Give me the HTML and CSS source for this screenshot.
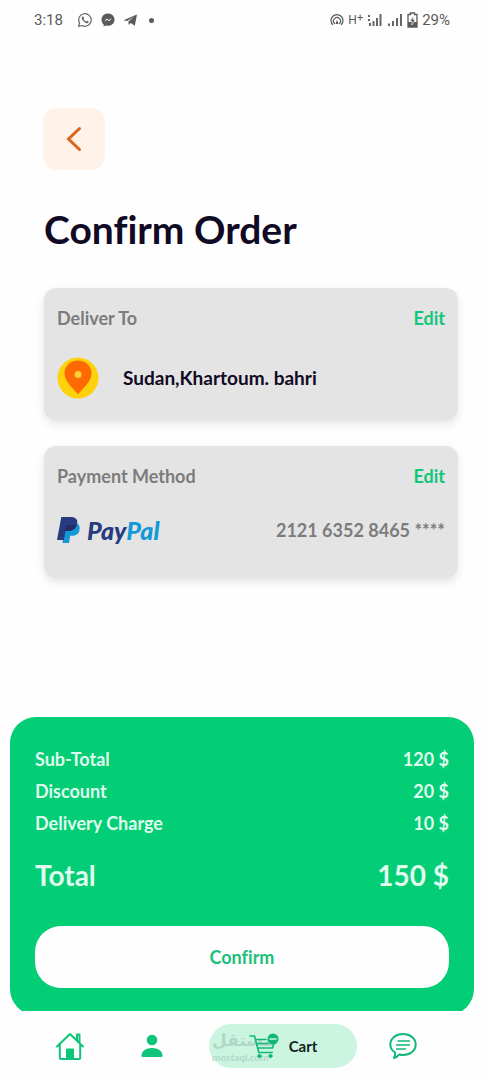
FILE: index.html
```html
<!DOCTYPE html>
<html lang="en">
<head>
<meta charset="utf-8">
<meta name="viewport" content="width=device-width, initial-scale=1">
<title>Confirm Order</title>
<link rel="stylesheet" href="styles.css">
</head>
<body>
<div class="screen">
  <header class="status">
    <div class="status-group status-left">
      <span class="clock">3:18</span>
      <svg width="16" height="16" viewBox="0 0 16 16" fill="none" stroke="#666" stroke-width="1.2" aria-hidden="true"><path d="M1.6 14.4l.9-3.3A6.3 6.3 0 1 1 5 13.500z" stroke-linejoin="round"/><path d="M5.200 4.500c-1 1.200-.3 3 1.400 4.800s3.700 2.600 4.900 1.500l.2-1.100-1.800-.9-.9.8c-1.200-.5-2-1.300-2.400-2.300l.7-.8-.8-1.800z" fill="#666" stroke="none"/></svg>
      <svg width="14" height="16" viewBox="0 0 14 16" aria-hidden="true"><path d="M7 1.500C3.200 1.500.5 4.200.5 7.700c0 1.900.8 3.500 2.100 4.600v2.200l2-1.100c.8.2 1.500.3 2.400.3 3.800 0 6.500-2.600 6.500-6S10.800 1.500 7 1.500z" fill="#5a5a5a"/><path d="M3 9.600l2.900-3.100 1.700 1.400L11 6 8.100 9.200 6.400 7.800z" fill="#fff"/></svg>
      <svg width="15" height="16" viewBox="0 0 15 16" aria-hidden="true"><path d="M.5 8.300L14 2.500l-2.200 11.300-4-2.800-1.900 2-.6-3.600 5.500-4.700-6.700 4.200z" fill="#5a5a5a"/></svg>
      <span class="dot"></span>
    </div>
    <div class="status-group status-right">
      <svg width="14" height="14" viewBox="0 0 14 14" fill="none" stroke="#5a5a5a" stroke-width="1.200" stroke-linecap="round" aria-hidden="true"><path d="M2.500 11.500a6 6 0 1 1 9 0M4.500 10.500a3.500 3.500 0 1 1 5 0"/><path d="M7 6.800l1.500 4.200h-3z" fill="#5a5a5a" stroke="none"/></svg>
      <span class="network">H<span class="plus">+</span></span>
      <svg width="16" height="14" viewBox="0 0 16 14" fill="#666" aria-hidden="true"><path d="M1 2h2v2H1zM1 6h2v2H1zM2 10h2v3H2zM5.500 8h2v5h-2zM9 5h2v8H9zM12.500 1h2v12h-2z"/></svg>
      <svg width="16" height="14" viewBox="0 0 16 14" fill="#666" aria-hidden="true"><path d="M1 10.500h2V13H1zM5 8h2v5H5zM9 5h2v8H9zM13 1h2v12h-2z"/></svg>
      <svg width="11" height="16" viewBox="0 0 11 16" aria-hidden="true"><path d="M3.500 1h4v1.500H10V15H1V2.500h2.500z" fill="#fff" stroke="#5a5a5a" stroke-width="1.300"/><path d="M1 10h9v5H1z" fill="#5a5a5a"/><path d="M6.300 4L3 9.300h2V13l3.300-5.200H6.300z" fill="#5a5a5a" stroke="#fff" stroke-width=".6"/></svg>
      <span class="battery">29%</span>
    </div>
  </header>

  <main class="content">
    <button class="back" type="button" aria-label="Back">
      <svg width="16" height="26" viewBox="0 0 16 26" fill="none" stroke="#d9661a" stroke-width="3" stroke-linecap="round" aria-hidden="true"><path d="M13.500 2.500L2.500 13l11 10.500"/></svg>
    </button>
    <h1 class="title">Confirm Order</h1>

    <section class="card">
      <div class="row">
        <h2 class="label">Deliver To</h2>
        <button class="edit" type="button" aria-label="Edit address">Edit</button>
      </div>
      <div class="row detail address">
        <svg width="42" height="42" viewBox="0 0 42 42" aria-hidden="true"><circle cx="21" cy="21" r="20.500" fill="#fdd20a"/><path d="M21 3.500c-7.700 0-13.500 5.500-13.500 12.700 0 7.600 6.700 13.300 13.500 21 6.800-7.700 13.500-13.400 13.500-21C34.500 9 28.700 3.500 21 3.500z" fill="#fd6a03"/><circle cx="21" cy="17.500" r="3.500" fill="#fdd035"/></svg>
        <p class="place">Sudan,Khartoum. bahri</p>
      </div>
    </section>

    <section class="card">
      <div class="row">
        <h2 class="label">Payment Method</h2>
        <button class="edit" type="button" aria-label="Edit payment method">Edit</button>
      </div>
      <div class="row detail payment">
        <div class="paypal">
          <svg width="24" height="28" viewBox="0 0 24 28" aria-hidden="true"><path d="M8 8h13c1.800 1.600 2.100 4.100 1.300 6.700-1 3.600-3.700 5-7.300 5h-1.800L12 27H5.500z" fill="#139ad6"/><path d="M4.300 1h9.200c5.300 0 7.700 2.600 6.600 7.300-1 4.600-4.200 6.700-9 6.700H8.500l-1.600 9H0z" fill="#263b80"/><path d="M8.500 15l.7-4.800c.1-.7.600-1.200 1.300-1.200h8.800c-1.400 4.300-4.400 6-8.600 6z" fill="#232c65"/></svg>
          <span class="wordmark"><span class="pay">Pay</span><span class="pal">Pal</span></span>
        </div>
        <p class="number">2121 6352 8465 ****</p>
      </div>
    </section>
  </main>

  <section class="summary">
    <dl class="lines">
      <div class="line"><dt>Sub-Total</dt><dd>120 $</dd></div>
      <div class="line"><dt>Discount</dt><dd>20 $</dd></div>
      <div class="line"><dt>Delivery Charge</dt><dd>10 $</dd></div>
      <div class="line total"><dt>Total</dt><dd>150 $</dd></div>
    </dl>
    <button class="confirm" type="button">Confirm</button>
  </section>

  <nav class="tabs" aria-label="Main">
    <a class="tab" href="#home" aria-label="Home"><svg width="30" height="30" viewBox="0 0 30 30" fill="none" stroke="#0cc578" stroke-width="2" stroke-linecap="round" stroke-linejoin="round" aria-hidden="true"><path d="M2 15.500L15 3l13 12.500M4.800 14v12.500q0 1.500 1.500 1.500h17.400q1.500 0 1.500-1.500V14M22 9V3.500h2.500V12"/><path d="M11.500 28V18h7v10z" fill="#0cc578" stroke-width="1"/></svg></a>
    <a class="tab" href="#profile" aria-label="Profile"><svg width="22" height="24" viewBox="0 0 22 24" fill="#0cc578" aria-hidden="true"><circle cx="11" cy="6" r="5.300"/><path d="M.5 22c0-5.200 4.500-8 10.500-8s10.500 2.800 10.500 8c0 .8-.6 1-1.300 1H1.800c-.8 0-1.300-.2-1.300-1z"/></svg></a>
    <a class="tab active" href="#cart">
      <span class="watermark" aria-hidden="true"><span class="mark-ar" lang="ar" dir="rtl">مستقل</span><span class="mark-en">mostaql.com</span></span>
      <svg class="cart" width="30" height="26" viewBox="0 0 30 26" fill="none" stroke="#0fb879" stroke-width="1.600" stroke-linecap="round" stroke-linejoin="round" aria-hidden="true"><path d="M1 3h4.500l4.300 16.500h13.500M7 6.500h10M8 10.500h11M9 15h14.500l1.500-5"/><circle cx="10.500" cy="23" r="1.600" fill="#0fb879" stroke-width="1"/><circle cx="21.500" cy="23" r="1.600" fill="#0fb879" stroke-width="1"/><circle cx="24" cy="6" r="5.500" fill="#0fb879" stroke="none"/><path d="M21 6h6" stroke="#cbf5e1"/></svg>
      <span class="tab-text">Cart</span>
    </a>
    <a class="tab" href="#chat" aria-label="Messages"><svg width="28" height="28" viewBox="0 0 28 28" fill="none" stroke="#0fb879" stroke-width="2" stroke-linecap="round" stroke-linejoin="round" aria-hidden="true"><path d="M6 20.500c-3-2-4.700-4.700-4.700-8C1.300 6.500 6.800 2 14 2s12.700 4.500 12.700 10.500S21.200 23 14 23c-1.400 0-2.700-.2-4-.5C8.700 24.500 7 25.600 5 26c1-1.800 1.300-3.500 1-5.500z"/><path d="M9 9h11.500M7.500 13h13M7.500 17h9" stroke-width="1.500"/></svg></a>
  </nav>
</div>
</body>
</html>
```

FILE: styles.css
```css
* { box-sizing: border-box; }

body {
  margin: 0;
  background: #fefefe;
  font-family: Lato, "Open Sans", sans-serif;
  font-weight: 700;
  font-variant-ligatures: none;
  color: #100a24;
}

h1, h2, p, dl, dd { margin: 0; }

button {
  border: 0;
  font: inherit;
  font-variant-ligatures: none;
  cursor: pointer;
}

.screen {
  display: flex;
  flex-direction: column;
  min-height: 100vh;
}

.status {
  display: flex;
  justify-content: space-between;
  align-items: center;
  height: 40px;
  padding: 0 34px;
  font: 400 15px Roboto, sans-serif;
  color: #5a5a5a;
}

.status-group { display: flex; align-items: center; }
.status-left { gap: 8px; }
.status-right { gap: 4px; }
.clock { margin-right: 6px; }
.network { display: flex; font-size: 12px; line-height: 14px; }
.plus { font-size: 11px; line-height: 10px; }
.battery { font-size: 15px; }

.dot {
  width: 5px;
  height: 5px;
  margin-left: 3px;
  border-radius: 50%;
  background: #5a5a5a;
}

.content { padding: 68px 26px 24px 44px; }

.back {
  display: grid;
  place-items: center;
  width: 62px;
  height: 62px;
  margin-left: -1px;
  padding: 0;
  border-radius: 14px;
  background: #fff3e9;
}

.title {
  margin: 34px 0;
  font-size: 39px;
  line-height: 50px;
}

.card {
  min-height: 132px;
  margin-bottom: 26px;
  padding: 18px 13px 16px;
  border-radius: 12px;
  background: #e4e4e4;
  box-shadow: 0 4px 10px rgba(0, 0, 0, 0.1);
}

.row {
  display: flex;
  justify-content: space-between;
  align-items: center;
}

.label, .edit, .number {
  font-size: 18px;
  font-weight: 700;
  line-height: 24px;
  color: #7c7c7c;
}

.edit {
  padding: 0;
  background: none;
  color: #12c67b;
}

.detail { margin-top: 27px; }
.address { justify-content: flex-start; gap: 24px; }
.place { font-size: 19px; line-height: 24px; }

.paypal { display: flex; align-items: center; gap: 6px; }

.wordmark {
  font-size: 25px;
  font-style: italic;
  font-weight: 900;
  line-height: 30px;
}

.pay { color: #263b80; }
.pal { color: #139ad6; }

.summary {
  margin: auto 10px 0;
  padding: 26px 25px 27px;
  border-radius: 26px;
  background: #03cd75;
  color: #dffcee;
}

.lines { font-size: 18px; line-height: 32px; }
.line { display: flex; justify-content: space-between; }

.total {
  margin: 16px 0 31px;
  font-size: 28px;
  line-height: 40px;
}

.confirm {
  width: 100%;
  height: 62px;
  border-radius: 26px;
  background: #fefefe;
  font-size: 18px;
  color: #1bc07c;
}

.tabs {
  position: relative;
  display: grid;
  grid-template-columns: 82fr 82fr 164px 92fr;
  align-items: center;
  height: 69px;
  margin-top: -4px;
  padding: 0 35px 0 29px;
  background: #fefefe;
}

.tab {
  display: flex;
  justify-content: center;
  align-items: center;
  color: #10241c;
  text-decoration: none;
}

.active {
  position: relative;
  gap: 10px;
  height: 44px;
  margin-left: 16px;
  border-radius: 22px;
  background: #cbf5e1;
}

.cart { position: relative; }
.tab-text { font-size: 15px; }

.watermark {
  position: absolute;
  left: 3px;
  top: 4px;
  display: flex;
  flex-direction: column;
  align-items: flex-start;
  color: #afd9c7;
}

.mark-ar { font: 700 17px/24px "DejaVu Sans", sans-serif; }
.mark-en { font-size: 10px; line-height: 10px; }
```
